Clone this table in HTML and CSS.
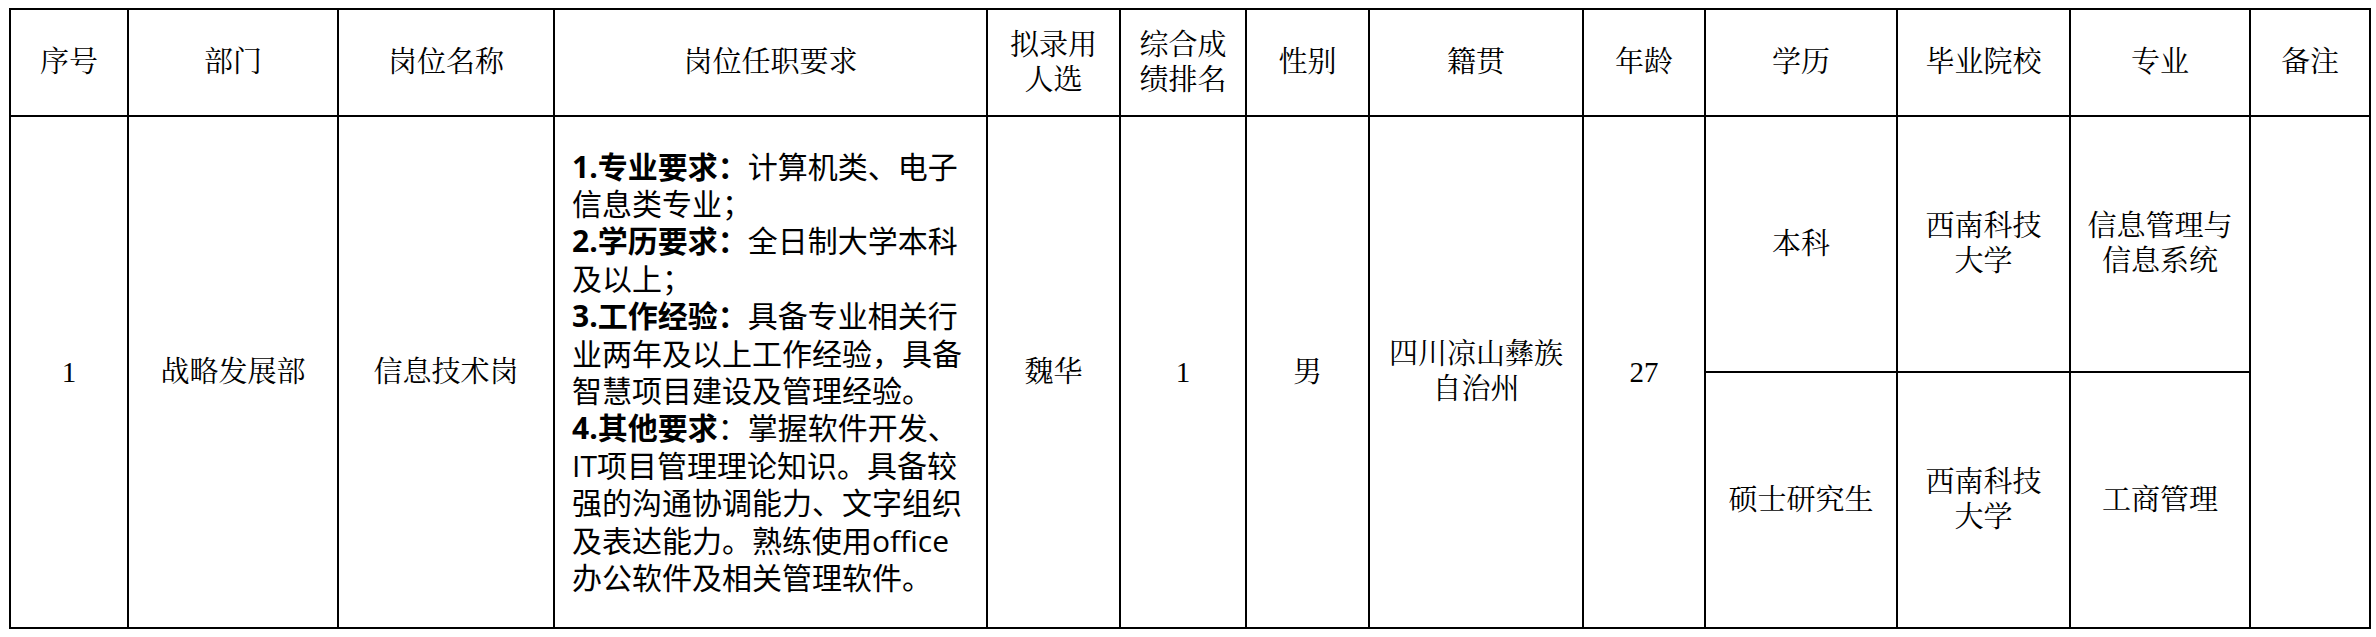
FILE: index.html
```html
<!DOCTYPE html>
<html lang="zh-CN">
<head>
<meta charset="utf-8">
<title>拟录用人选</title>
<link rel="stylesheet" href="styles.css">
</head>
<body>
<table class="grid">
  <thead>
    <tr class="head">
      <th class="c-no">序号</th>
      <th class="c-dept">部门</th>
      <th class="c-post">岗位名称</th>
      <th class="c-req">岗位任职要求</th>
      <th class="c-name">拟录用<br>人选</th>
      <th class="c-rank">综合成<br>绩排名</th>
      <th class="c-sex">性别</th>
      <th class="c-home">籍贯</th>
      <th class="c-age">年龄</th>
      <th class="c-edu">学历</th>
      <th class="c-school">毕业院校</th>
      <th class="c-major">专业</th>
      <th class="c-note">备注</th>
    </tr>
  </thead>
  <tbody>
    <tr class="sub-a">
      <td rowspan="2" class="num">1</td>
      <td rowspan="2">战略发展部</td>
      <td rowspan="2">信息技术岗</td>
      <td rowspan="2" class="req">
        <div class="req-text"><b>1.专业要求：</b>计算机类、电子<br>信息类专业；<br><b>2.学历要求：</b>全日制大学本科<br>及以上；<br><b>3.工作经验：</b>具备专业相关行<br>业两年及以上工作经验，具备<br>智慧项目建设及管理经验。<br><b>4.其他要求</b>：掌握软件开发、<br>IT项目管理理论知识。具备较<br>强的沟通协调能力、文字组织<br>及表达能力。熟练使用office<br>办公软件及相关管理软件。</div>
      </td>
      <td rowspan="2">魏华</td>
      <td rowspan="2" class="num">1</td>
      <td rowspan="2">男</td>
      <td rowspan="2">四川凉山彝族<br>自治州</td>
      <td rowspan="2" class="num">27</td>
      <td class="half">本科</td>
      <td class="half">西南科技<br>大学</td>
      <td class="half">信息管理与<br>信息系统</td>
      <td rowspan="2"></td>
    </tr>
    <tr class="sub-b">
      <td class="half">硕士研究生</td>
      <td class="half">西南科技<br>大学</td>
      <td class="half">工商管理</td>
    </tr>
  </tbody>
</table>
</body>
</html>
```
FILE: styles.css
```css
html, body {
  margin: 0;
  padding: 0;
  background: #ffffff;
}
body {
  padding: 8px 0 0 9px;
}
.grid {
  border-collapse: separate;
  border-spacing: 0;
  table-layout: fixed;
  width: 2362px;
  border-left: 2px solid #000;
  border-top: 2px solid #000;
  font-family: "Liberation Serif", "Noto Serif CJK SC", "Noto Sans CJK SC", serif;
  font-size: 29px;
  color: #000;
}
.grid th, .grid td {
  box-sizing: border-box;
  border-right: 2px solid #000;
  border-bottom: 2px solid #000;
  text-align: center;
  vertical-align: middle;
  padding: 0 6px;
  font-weight: normal;
  line-height: 35px;
}
.head th {
  height: 107px;
}
.half {
  height: 256px;
}

.c-no { width: 118px; }
.c-dept { width: 210px; }
.c-post { width: 216px; }
.c-req { width: 433px; }
.c-name { width: 133px; }
.c-rank { width: 126px; }
.c-sex { width: 123px; }
.c-home { width: 214px; }
.c-age { width: 122px; }
.c-edu { width: 192px; }
.c-school { width: 173px; }
.c-major { width: 180px; }
.c-note { width: 120px; }

.num {
  font-family: "Liberation Serif", serif;
}
.grid .req {
  text-align: left;
  padding: 0 4px 0 17px;
}
.req-text {
  font-family: "Open Sans", "Noto Sans CJK SC", sans-serif;
  font-size: 30px;
  line-height: 37.4px;
  white-space: nowrap;
  text-align: left;
}
.req-text b {
  font-weight: bold;
}
```
